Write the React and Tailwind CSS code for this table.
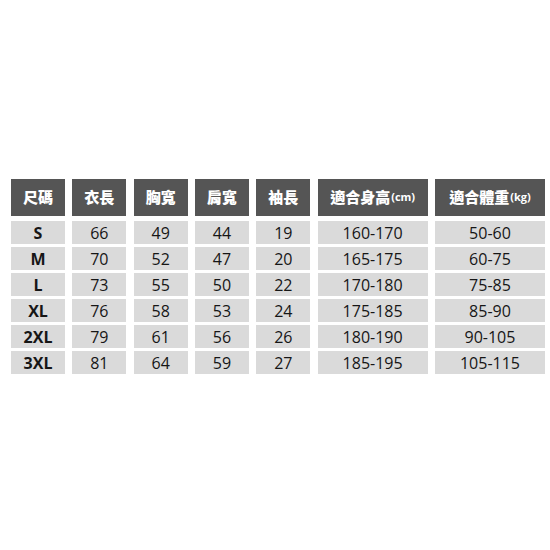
import React from "react";

const headers = [
  { label: "尺碼" },
  { label: "衣長" },
  { label: "胸寬" },
  { label: "肩寬" },
  { label: "袖長" },
  { label: "適合身高", unit: "(cm)" },
  { label: "適合體重", unit: "(kg)" },
];

const rows = [
  ["S", "66", "49", "44", "19", "160-170", "50-60"],
  ["M", "70", "52", "47", "20", "165-175", "60-75"],
  ["L", "73", "55", "50", "22", "170-180", "75-85"],
  ["XL", "76", "58", "53", "24", "175-185", "85-90"],
  ["2XL", "79", "61", "56", "26", "180-190", "90-105"],
  ["3XL", "81", "64", "59", "27", "185-195", "105-115"],
];

function App() {
  return (
    <div
      className="w-[550px] h-[550px] bg-white pt-[179px] pl-[11px]"
      style={{ fontFamily: '"Open Sans", "Noto Sans CJK TC", sans-serif' }}
    >
      {/* size chart */}
      <div className="grid grid-cols-[54px_54px_54px_54px_54px_110px_110px] gap-x-[7.33px] gap-y-[3px] w-fit">
        {headers.map((h, i) => (
          <div
            key={i}
            className="h-[37px] mb-[2px] bg-[#555555] text-white flex items-center justify-center"
          >
            <span
              className="text-[15px] font-black"
              style={{ fontFamily: '"Noto Sans CJK TC", sans-serif' }}
            >
              {h.label}
            </span>
            {h.unit && <span className="text-[11px] ml-[1px] font-bold">{h.unit}</span>}
          </div>
        ))}
        {rows.map((r, ri) =>
          r.map((c, ci) => (
            <div
              key={`${ri}-${ci}`}
              className={`h-[23px] bg-[#dadada] text-[#161616] flex items-center justify-center text-[16px] ${
                ci === 0 ? "font-bold" : "font-medium"
              }`}
            >
              {c}
            </div>
          ))
        )}
      </div>
    </div>
  );
}

export default App;
